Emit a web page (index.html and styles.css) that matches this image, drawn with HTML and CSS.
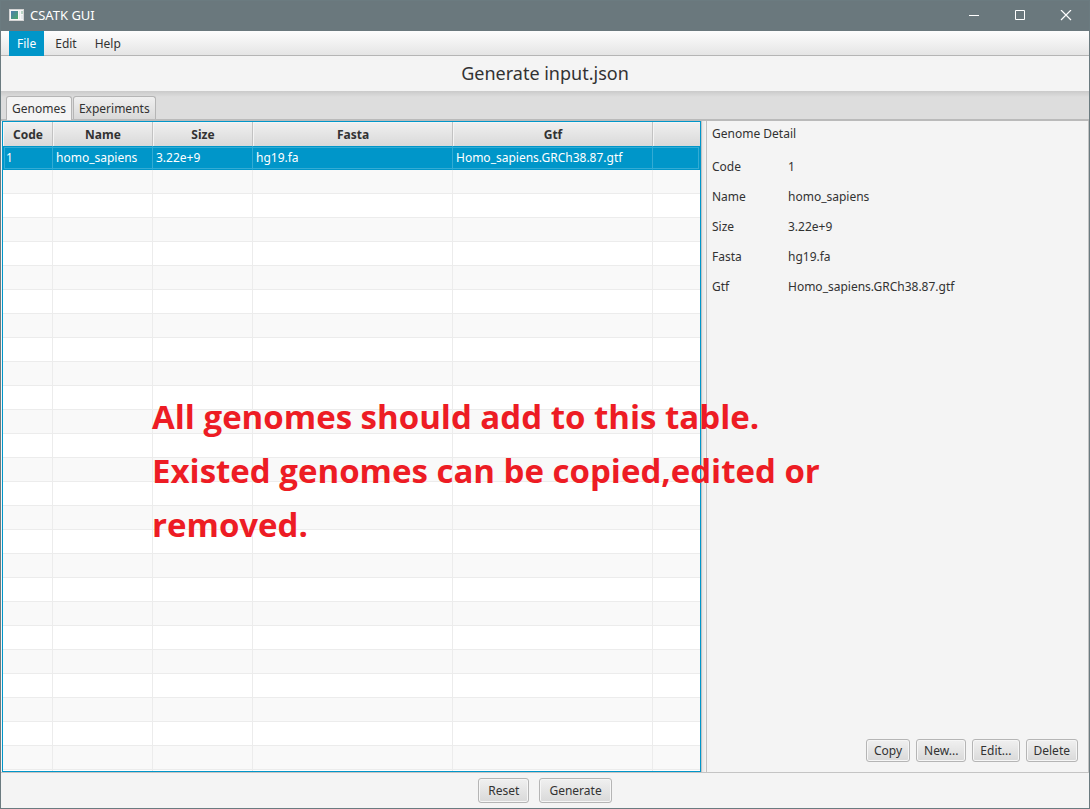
FILE: index.html
```html
<!DOCTYPE html>
<html lang="en">
<head>
<meta charset="utf-8">
<title>CSATK GUI</title>
<link rel="stylesheet" href="styles.css">
</head>
<body>
<div class="window">
  <header class="titlebar">
    <svg class="app-icon" width="16" height="16" viewBox="0 0 16 16" aria-hidden="true">
      <defs><linearGradient id="pane" x1="0" y1="0" x2="1" y2="1"><stop offset="0" stop-color="#4b7bb0"/><stop offset="1" stop-color="#48a868"/></linearGradient></defs>
      <rect x="0.5" y="1.5" width="14" height="11" fill="#f6f6f6" stroke="#d4d4d4"/>
      <rect x="2" y="3" width="7" height="8" fill="url(#pane)"/>
      <rect x="10" y="3" width="1" height="8" fill="#e3e9ec"/>
      <rect x="12" y="3" width="2" height="3" fill="#b9d4c4"/>
      <rect x="12" y="7" width="2" height="4" fill="#e6eaec"/>
    </svg>
    <span class="app-name">CSATK GUI</span>
    <button class="win-btn" type="button" aria-label="Minimize"><svg width="12" height="12" viewBox="0 0 12 12"><path d="M1 5.5h10" stroke="#fff" fill="none"/></svg></button>
    <button class="win-btn" type="button" aria-label="Maximize"><svg width="12" height="12" viewBox="0 0 12 12"><path d="M1.5 0.5h9v9h-9z" stroke="#fff" fill="none"/></svg></button>
    <button class="win-btn" type="button" aria-label="Close"><svg width="12" height="12" viewBox="0 0 12 12"><path d="M1 0l10 10M11 0L1 10" stroke="#fff" stroke-width="1.2" fill="none"/></svg></button>
  </header>
  <nav class="menubar">
    <button class="menu menu-active" type="button">File</button>
    <button class="menu" type="button">Edit</button>
    <button class="menu" type="button">Help</button>
  </nav>
  <h1 class="page-title">Generate input.json</h1>
  <div class="tabs" role="tablist">
    <button class="tab tab-active" type="button" role="tab" aria-selected="true">Genomes</button>
    <button class="tab" type="button" role="tab" aria-selected="false">Experiments</button>
  </div>
  <main class="split">
    <section class="table-pane">
      <table class="genomes">
        <colgroup><col class="col-code"><col class="col-mid"><col class="col-mid"><col class="col-wide"><col class="col-wide"><col></colgroup>
        <thead><tr><th>Code</th><th>Name</th><th>Size</th><th>Fasta</th><th>Gtf</th><th></th></tr></thead>
        <tbody>
          <tr class="selected"><td>1</td><td>homo_sapiens</td><td>3.22e+9</td><td>hg19.fa</td><td>Homo_sapiens.GRCh38.87.gtf</td><td></td></tr>
          <tr><td></td><td></td><td></td><td></td><td></td><td></td></tr>
          <tr><td></td><td></td><td></td><td></td><td></td><td></td></tr>
          <tr><td></td><td></td><td></td><td></td><td></td><td></td></tr>
          <tr><td></td><td></td><td></td><td></td><td></td><td></td></tr>
          <tr><td></td><td></td><td></td><td></td><td></td><td></td></tr>
          <tr><td></td><td></td><td></td><td></td><td></td><td></td></tr>
          <tr><td></td><td></td><td></td><td></td><td></td><td></td></tr>
          <tr><td></td><td></td><td></td><td></td><td></td><td></td></tr>
          <tr><td></td><td></td><td></td><td></td><td></td><td></td></tr>
          <tr><td></td><td></td><td></td><td></td><td></td><td></td></tr>
          <tr><td></td><td></td><td></td><td></td><td></td><td></td></tr>
          <tr><td></td><td></td><td></td><td></td><td></td><td></td></tr>
          <tr><td></td><td></td><td></td><td></td><td></td><td></td></tr>
          <tr><td></td><td></td><td></td><td></td><td></td><td></td></tr>
          <tr><td></td><td></td><td></td><td></td><td></td><td></td></tr>
          <tr><td></td><td></td><td></td><td></td><td></td><td></td></tr>
          <tr><td></td><td></td><td></td><td></td><td></td><td></td></tr>
          <tr><td></td><td></td><td></td><td></td><td></td><td></td></tr>
          <tr><td></td><td></td><td></td><td></td><td></td><td></td></tr>
          <tr><td></td><td></td><td></td><td></td><td></td><td></td></tr>
          <tr><td></td><td></td><td></td><td></td><td></td><td></td></tr>
          <tr><td></td><td></td><td></td><td></td><td></td><td></td></tr>
          <tr><td></td><td></td><td></td><td></td><td></td><td></td></tr>
          <tr><td></td><td></td><td></td><td></td><td></td><td></td></tr>
          <tr><td></td><td></td><td></td><td></td><td></td><td></td></tr>
          <tr><td></td><td></td><td></td><td></td><td></td><td></td></tr>
        </tbody>
      </table>
    </section>
    <div class="divider" role="separator"></div>
    <section class="detail">
      <h2 class="detail-title">Genome Detail</h2>
      <dl class="fields">
        <dt>Code</dt><dd>1</dd>
        <dt>Name</dt><dd>homo_sapiens</dd>
        <dt>Size</dt><dd>3.22e+9</dd>
        <dt>Fasta</dt><dd>hg19.fa</dd>
        <dt>Gtf</dt><dd>Homo_sapiens.GRCh38.87.gtf</dd>
      </dl>
      <div class="actions">
        <button class="btn" type="button">Copy</button>
        <button class="btn" type="button">New...</button>
        <button class="btn" type="button">Edit...</button>
        <button class="btn" type="button">Delete</button>
      </div>
    </section>
    <p class="note">All genomes should add to this table.<br>Existed genomes can be copied,edited or<br>removed.</p>
  </main>
  <footer class="footer">
    <button class="btn btn-tall" type="button">Reset</button>
    <button class="btn btn-tall" type="button">Generate</button>
  </footer>
</div>
</body>
</html>
```

FILE: styles.css
```css
* { box-sizing: border-box; }
body { margin: 0; }
button { font: inherit; color: inherit; margin: 0; border: 0; background: none; }

.window {
  display: flex;
  flex-direction: column;
  height: 100vh;
  border: 1px solid #6b7b80;
  background: #f4f4f4;
  color: #323232;
  font: 12px/16px "Noto Sans", "Open Sans", sans-serif;
}

.titlebar {
  display: flex;
  align-items: center;
  height: 30px;
  padding-left: 8px;
  background: #6a787d;
  color: #fff;
}
.app-icon { margin-right: 5px; }
.app-name { flex: 1; padding-bottom: 2px; font-size: 13px; }
.win-btn { display: flex; align-items: center; justify-content: center; width: 46px; height: 30px; padding: 0; }

.menubar {
  display: flex;
  height: 25px;
  padding-left: 8px;
  border-bottom: 1px solid #b5b5b5;
  background: linear-gradient(#fdfdfd, #e5e5e5);
}
.menu { height: 25px; padding: 0 9px; }
.menu-active { margin-right: 2px; padding: 0 8px; background: #0096c9; color: #fff; }

.page-title { margin: 0; height: 35px; font-size: 18px; line-height: 35px; font-weight: 400; text-align: center; }

.tabs {
  display: flex;
  align-items: flex-end;
  gap: 1px;
  height: 30px;
  padding: 0 5px;
  border-bottom: 2px solid #bababa;
  background: linear-gradient(#cacaca, #dddddd 6px);
}
.tab {
  height: 23px;
  padding: 1px 5px 0;
  border: 1px solid #b5b5b5;
  border-bottom: 0;
  border-radius: 3px 3px 0 0;
  background: linear-gradient(#f0f0f0, #d9d9d9);
  white-space: nowrap;
}
.tab-active { height: 24px; margin-bottom: -1px; background: #f4f4f4; }

.split {
  position: relative;
  display: grid;
  grid-template-columns: minmax(0, 699fr) 6px minmax(0, 382fr);
  grid-template-rows: minmax(0, 1fr);
  flex: 1;
  min-height: 0;
  padding-left: 1px;
  border-bottom: 1px solid #c4c4c4;
}
.table-pane { overflow: hidden; border: 1px solid #0096c9; background: #fff; }
.genomes { width: 100%; table-layout: fixed; border-collapse: separate; border-spacing: 0; }
.col-code { width: 50px; }
.col-mid { width: 100px; }
.col-wide { width: 200px; }
.genomes th {
  height: 24px;
  padding: 1px 0 0 1px;
  border-right: 1px solid #c2c2c2;
  box-shadow: inset 1px 1px #f4f4f4;
  background: linear-gradient(#f0f0f0, #d9d9d9);
  font-weight: 700;
}
.genomes td {
  height: 24px;
  padding: 0 3px;
  border-right: 1px solid #ececec;
  border-bottom: 1px solid #ececec;
  white-space: nowrap;
}
.genomes th:last-child, .genomes td:last-child { border-right: 0; }
.genomes tbody tr:nth-child(even) { background: #f9f9f9; }
.genomes .selected { background: #0096c9; color: #fff; outline: 1px solid #33abd4; outline-offset: -2px; }
.genomes .selected td { border-color: #33abd4; border-bottom-color: #0096c9; }

.divider { border-right: 1px solid #c2c2c2; background: linear-gradient(90deg, #c2c2c2 1px, #e4e4e4 1px, #f6f6f6); }

.detail { display: flex; flex-direction: column; padding: 5px 10px 10px 5px; border-right: 1px solid #c4c4c4; }
.detail-title { margin: 0 0 10px; font-size: 12px; line-height: 16px; font-weight: 400; }
.fields { display: grid; grid-template-columns: 76px 1fr; grid-auto-rows: 30px; align-items: center; margin: 0; }
.fields dd { margin: 0; }
.actions { display: flex; justify-content: flex-end; gap: 6px; margin-top: auto; }

.btn {
  height: 23px;
  padding: 0 7px;
  border: 1px solid #b5b5b5;
  border-radius: 3px;
  box-shadow: inset 0 0 0 1px #f6f6f6;
  background: linear-gradient(#f0f0f0, #d9d9d9);
  white-space: nowrap;
}
.btn-tall { height: 25px; padding: 0 9px; }

.note {
  position: absolute;
  top: 269px;
  left: 151px;
  margin: 0;
  color: #ed1c24;
  font-family: "Open Sans", "Noto Sans", sans-serif;
  font-size: 33px;
  line-height: 54px;
  font-weight: 700;
  white-space: nowrap;
}

.footer { display: flex; justify-content: center; gap: 10px; padding: 5px; }
```
